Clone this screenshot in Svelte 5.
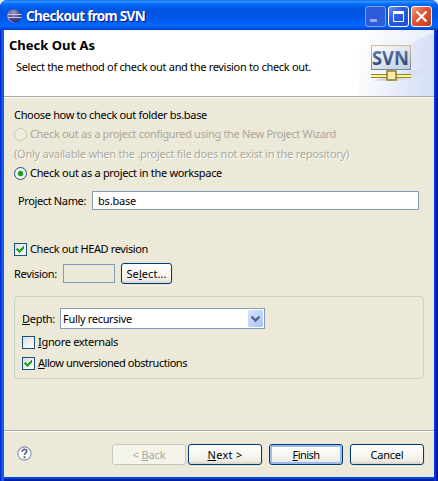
<script>
  let head = $state(true);
  let ignore = $state(false);
  let allow = $state(true);

  function fit(node, width) {
    const natural = node.getBoundingClientRect().width;
    const count = node.textContent.length;
    node.style.letterSpacing = `${(width - natural) / count}px`;
  }
</script>

{#snippet tick(on)}
  <svg class="check" width="13" height="13" viewBox="0 0 13 13" shape-rendering="crispEdges">
    <defs>
      <linearGradient id="boxfill" x1="0" y1="0" x2="1" y2="1">
        <stop offset="0" stop-color="#dcdcd7" /><stop offset="1" stop-color="#fff" />
      </linearGradient>
    </defs>
    <rect x=".5" y=".5" width="12" height="12" fill="url(#boxfill)" stroke="#1c5180" />
    {#if on}
      <path d="M3 5h1v1h1v1h1v-1h1v-1h1v-1h1v-1h1v3h-1v1h-1v1h-1v1h-1v1h-1v-1h-1v-1h-1v-1h-1z" fill="#21a121" />
    {/if}
  </svg>
{/snippet}

<div class="window">
  <div class="title">
    <svg class="logo" width="16" height="14" viewBox="0 0 16 14">
      <defs>
        <radialGradient id="ball" cx=".4" cy=".25" r=".75">
          <stop offset="0" stop-color="#a89fc4" /><stop offset=".5" stop-color="#62599a" /><stop offset="1" stop-color="#30266c" />
        </radialGradient>
      </defs>
      <ellipse cx="6.5" cy="7" rx="6.5" ry="6.4" fill="#8f83b4" />
      <circle cx="8" cy="7" r="6.2" fill="url(#ball)" />
      <path d="M1 5.5h13.5M1 8.5h13.5" stroke="#c5c9ea" />
    </svg>
    <span class="caption" use:fit={119}>Checkout from SVN</span>
    <div class="controls">
      <svg width="21" height="21" viewBox="0 0 21 21">
        <defs>
          <linearGradient id="blue" x1="0" y1="0" x2="1" y2="1"><stop offset="0" stop-color="#6d95f1" /><stop offset=".4" stop-color="#2b5be0" /><stop offset="1" stop-color="#1d50d8" /></linearGradient>
          <linearGradient id="red" x1="0" y1="0" x2="1" y2="1"><stop offset="0" stop-color="#f0a08a" /><stop offset=".4" stop-color="#e3573a" /><stop offset="1" stop-color="#c73a13" /></linearGradient>
        </defs>
        <rect x=".5" y=".5" width="20" height="20" rx="2.5" fill="#2d5cd9" stroke="#7f9fee" />
        <path d="M5 13h7v3H5z" fill="#90a9ef" />
      </svg>
      <svg width="21" height="21" viewBox="0 0 21 21">
        <rect x=".5" y=".5" width="20" height="20" rx="2.5" fill="url(#blue)" stroke="#fff" />
        <path d="M5.5 5.500h10v10h-10z" fill="none" stroke="#fff" /><path d="M5 5h11v3H5z" fill="#fff" />
      </svg>
      <svg width="21" height="21" viewBox="0 0 21 21">
        <rect x=".5" y=".5" width="20" height="20" rx="2.5" fill="url(#red)" stroke="#fff" />
        <path d="M5.500 5.500l10 10M15.500 5.500l-10 10" stroke="#fff" stroke-width="2.2" />
      </svg>
    </div>
  </div>

  <div class="client">
    <header>
      <div class="heading">
        <h1><span use:fit={86}>Check Out As</span></h1>
        <p><span use:fit={295}>Select the method of check out and the revision to check out.</span></p>
      </div>
      <svg class="banner" width="75" height="66" viewBox="0 0 75 66">
        <defs>
          <linearGradient id="sky" x1="0" y1="0" x2="1" y2=".3"><stop offset="0" stop-color="#fff" /><stop offset="1" stop-color="#e6ecf9" /></linearGradient>
          <linearGradient id="arc" gradientUnits="userSpaceOnUse" x1="15" y1="0" x2="75" y2="0"><stop offset="0" stop-color="#dfe7f7" stop-opacity="0" /><stop offset="1" stop-color="#d5dff4" /></linearGradient>
          <linearGradient id="panel" x1="0" y1="0" x2="1" y2="1"><stop offset="0" stop-color="#fff" /><stop offset="1" stop-color="#b9cde3" /></linearGradient>
          <linearGradient id="edge" x1="0" y1="0" x2="0" y2="1"><stop offset="0" stop-color="#dfb992" /><stop offset="1" stop-color="#74889b" /></linearGradient>
          <linearGradient id="word" x1="0" y1="0" x2="0" y2="1"><stop offset="0" stop-color="#7187ad" /><stop offset="1" stop-color="#1f3768" /></linearGradient>
          <linearGradient id="shade" x1="0" y1="0" x2="1" y2="0"><stop offset="0" stop-color="#b9b6cf" /><stop offset="1" stop-color="#d3d9ec" stop-opacity=".3" /></linearGradient>
        </defs>
        <rect width="75" height="66" fill="url(#sky)" />
        <path d="M15 66C24 40 45 12 75 3V66z" fill="url(#arc)" />
        <path d="M14 50.500L54 40.500Q70 39 63 43Q55 50 38 51z" fill="url(#shade)" opacity=".7" />
        <rect x="12.500" y="15.500" width="39" height="24" fill="url(#panel)" stroke="url(#edge)" />
        <text x="13" y="35" textLength="37" lengthAdjust="spacingAndGlyphs" fill="url(#word)">SVN</text>
        <path d="M12 44.500h40M12 47.500h40" stroke="#9a8226" /><path d="M12 46h40" stroke="#fff3a8" stroke-width="2" />
        <rect x="28" y="41" width="9" height="9" fill="#f8ebae" stroke="#957a21" stroke-width="1.500" />
      </svg>
    </header>

    <main>
      <div class="line intro"><span use:fit={193}>Choose how to check out folder bs.base</span></div>
      <div class="line off first">
        <svg width="13" height="13"><circle cx="6.500" cy="6.500" r="6" fill="#efecdf" stroke="#cac8bb" /></svg>
        <span use:fit={306}>Check out as a project configured using the New Project Wizard</span>
      </div>
      <div class="line off note"><span use:fit={335}>(Only available when the .project file does not exist in the repository)</span></div>
      <div class="line chosen">
        <svg width="13" height="13">
          <circle cx="6.500" cy="6.500" r="6" fill="#f3f3ef" stroke="#1c5180" /><circle cx="6.500" cy="6.500" r="2.700" fill="#21a121" />
        </svg>
        <span use:fit={192}>Check out as a project in the workspace</span>
      </div>
      <div class="row name">
        <span class="label"><span use:fit={68}>Project Name:</span></span>
        <div class="field"><span use:fit={38}>bs.base</span></div>
      </div>
      <label class="line head"><input type="checkbox" bind:checked={head} />{@render tick(head)}<span use:fit={118}>Check out HEAD revision</span></label>
      <div class="row revision">
        <span class="label"><span use:fit={43}>Revision:</span></span>
        <div class="field empty"></div>
        <button class="select"><span use:fit={40}>Se<u>l</u>ect...</span></button>
      </div>
      <section>
        <div class="row depth">
          <span class="label"><span use:fit={33}><u>D</u>epth:</span></span>
          <div class="combo">
            <span use:fit={69}>Fully recursive</span>
            <svg width="15" height="17" viewBox="0 0 15 17">
              <defs><linearGradient id="drop" x1="0" y1="0" x2="1" y2="1"><stop offset="0" stop-color="#d6e2fd" /><stop offset="1" stop-color="#abc5f7" /></linearGradient></defs>
              <rect width="15" height="17" rx="1.500" fill="url(#drop)" />
              <path d="M3.500 6.500l4 4l4-4" fill="none" stroke="#4d6185" stroke-width="2.300" />
            </svg>
          </div>
        </div>
        <label class="line ignore"><input type="checkbox" bind:checked={ignore} />{@render tick(ignore)}<span use:fit={80}><u>I</u>gnore externals</span></label>
        <label class="line allow"><input type="checkbox" bind:checked={allow} />{@render tick(allow)}<span use:fit={149}><u>A</u>llow unversioned obstructions</span></label>
      </section>
    </main>

    <footer>
      <svg class="help" width="15" height="15" viewBox="0 0 15 15">
        <circle cx="7.500" cy="7.500" r="6.600" fill="#fff" stroke="#8694ad" stroke-width="1.100" />
        <path d="M5.200 6V5.200C5.200 2.800 9.800 2.800 9.800 5.300C9.800 7 7.500 7 7.500 9" fill="none" stroke="#52658b" stroke-width="1.600" />
        <path d="M6.500 10.200h2v2h-2z" fill="#52658b" />
      </svg>
      <button class="back" disabled><span use:fit={33}>&lt; <u>B</u>ack</span></button>
      <button class="next"><span use:fit={35}><u>N</u>ext &gt;</span></button>
      <button class="finish"><span use:fit={27}><u>F</u>inish</span></button>
      <button class="cancel"><span use:fit={33}>Cancel</span></button>
    </footer>
  </div>
</div>

<style>
  :global(body) { background: #ece9d8; }
  .window, .window * { box-sizing: border-box; }
  .window {
    width: 438px; height: 481px; display: flex; flex-direction: column; overflow: hidden;
    border-radius: 7px 7px 0 0; font: 11px/14px "Noto Sans", sans-serif; color: #000; white-space: nowrap;
    background: linear-gradient(90deg, #0019cf, #0831d9 1px, #166aee 2px, #0855dd 4px, #0855dd 434px, #003de0 434px, #0030d0 436px, #00138c 437px);
  }
  svg { display: block; flex: none; }
  u { text-decoration: underline; text-underline-offset: 1px; text-decoration-thickness: 1px; text-decoration-skip-ink: none; }
  .title {
    height: 30px; flex: none; display: flex; align-items: center; padding: 2px 6px 0 7px;
    background: linear-gradient(#0058ee, #3593ff 1px, #288eff 2px, #127dff 3px, #036ffc 4px, #0262ee 6px, #0057e5 9px, #0054e3 14px, #005bf0 20px, #0066ff 25px, #0061f8 27px, #0047d8 29px, #0040cc);
  }
  .caption { margin-left: 3px; font: bold 13.5px/16px "Noto Sans", sans-serif; color: #fff; text-shadow: 1px 1px #0f1089; }
  .controls { margin-left: auto; display: flex; gap: 2px; }
  .client { flex: 1; margin: 0 4px 4px; display: flex; flex-direction: column; background: #ece9d8; box-shadow: 0 2px #0046e8, 0 4px #001ea0; }
  header { height: 67px; display: flex; background: #fff; border-bottom: 1px solid #aca899; box-shadow: 0 1px #fff; }
  .heading { flex: 1; padding: 7px 0 0 5px; }
  h1 { margin: 0; font: bold 13px/17px "Noto Sans", sans-serif; }
  p { margin: 6px 0 0 7px; }
  .banner text { font: bold 19px "Noto Sans", sans-serif; }
  main { height: 333px; padding: 11px 10px 0; }
  .line { height: 14px; display: flex; align-items: center; gap: 3px; }
  .off { color: #aca899; }
  .first { margin-top: 5px; }
  .note { margin-top: 6px; text-shadow: 1px 1px #fff; }
  .chosen { margin-top: 5px; }
  .row { display: flex; align-items: center; }
  .name { height: 19px; margin-top: 11px; padding-left: 4px; }
  .name .label { width: 74px; }
  .field { width: 327px; height: 19px; padding: 2px 5px; border: 1px solid #7f9db9; background: #fff; }
  .head { margin-top: 32px; }
  .revision { height: 21px; margin-top: 7px; }
  .revision .label { width: 49px; }
  .empty { width: 52px; background: #ece9d8; }
  button {
    height: 21px; padding: 0; border: 1px solid #003c74; border-radius: 3px; color: inherit; font: inherit; line-height: 19px;
    background: linear-gradient(#fff, #f4f3ee 65%, #edebe4 85%, #d6d0c5); box-shadow: 0 0 0 1px #e4e0d0, 0 1px 0 1px #f5f3eb;
  }
  .select { width: 51px; margin-left: 6px; }
  section { width: 410px; height: 83px; margin: 12px 0 0; padding: 11px 7px 0; border: 1px solid #d0d0bf; border-radius: 4px; }
  .depth .label { width: 38px; }
  .combo { width: 205px; height: 21px; display: flex; align-items: center; justify-content: space-between; padding: 0 1px 0 2px; border: 1px solid #7f9db9; background: #fff; }
  .ignore { margin-top: 6px; }
  .allow { margin-top: 7px; }
  input { display: none; }
  footer { flex: 1; display: flex; align-items: flex-start; padding: 13px 10px 0 13px; border-top: 1px solid #aca899; box-shadow: inset 0 1px #fff; }
  .help { margin-top: 2px; }
  footer button { width: 74px; }
  .back { margin-left: 80px; color: #aca899; border-color: #c9c7ba; background: #f5f4ea; box-shadow: none; }
  .next { margin-left: 2px; }
  .finish { margin-left: 7px; box-shadow: inset 0 0 0 2px #9dbaee, inset 0 -2px #6982ee, 0 1px #f5f3eb; }
  .cancel { margin-left: 7px; }
</style>
